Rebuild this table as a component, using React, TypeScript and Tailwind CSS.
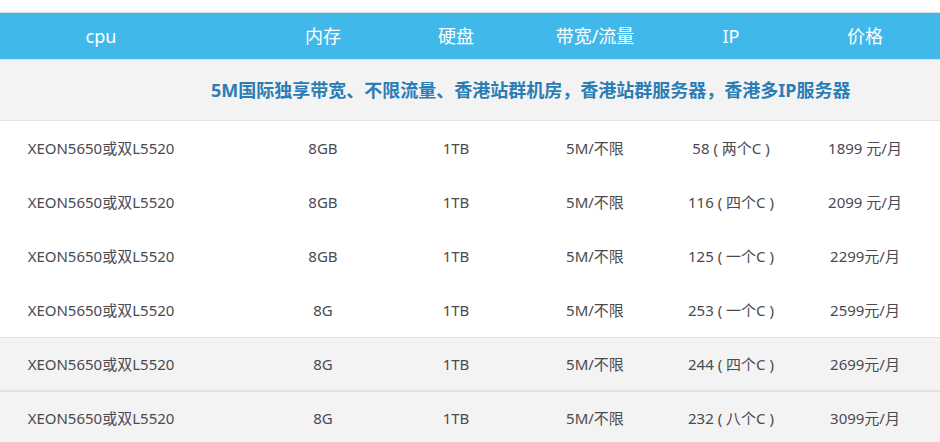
import React from "react";

const rows = [
  { cpu: "XEON5650或双L5520", mem: "8GB", disk: "1TB", bw: "5M/不限", ip: "58 ( 两个C )", price: "1899 元/月", gray: false },
  { cpu: "XEON5650或双L5520", mem: "8GB", disk: "1TB", bw: "5M/不限", ip: "116 ( 四个C )", price: "2099 元/月", gray: false },
  { cpu: "XEON5650或双L5520", mem: "8GB", disk: "1TB", bw: "5M/不限", ip: "125 ( 一个C )", price: "2299元/月", gray: false },
  { cpu: "XEON5650或双L5520", mem: "8G", disk: "1TB", bw: "5M/不限", ip: "253 ( 一个C )", price: "2599元/月", gray: false },
  { cpu: "XEON5650或双L5520", mem: "8G", disk: "1TB", bw: "5M/不限", ip: "244 ( 四个C )", price: "2699元/月", gray: true },
  { cpu: "XEON5650或双L5520", mem: "8G", disk: "1TB", bw: "5M/不限", ip: "232 ( 八个C )", price: "3099元/月", gray: true },
];

function Cells({ vals, cls }: { vals: string[]; cls: string }) {
  return (
    <>
      <div className={`w-[202px] text-center ${cls}`}>{vals[0]}</div>
      <div className={`w-[188px] pl-[54px] text-center ${cls}`}>{vals[1]}</div>
      <div className={`w-[140px] pr-[8px] text-center ${cls}`}>{vals[2]}</div>
      <div className={`w-[138px] pr-[8px] text-center ${cls}`}>{vals[3]}</div>
      <div className={`w-[135px] pr-[9px] text-center ${cls}`}>{vals[4]}</div>
      <div className={`w-[137px] pr-[13px] text-center ${cls}`}>{vals[5]}</div>
    </>
  );
}

export default function App() {
  return (
    <div
      className="w-[940px] h-[442px] overflow-hidden bg-white"
      style={{ fontFamily: '"Noto Sans", "Noto Sans CJK SC", sans-serif' }}
    >
      <div className="h-[12px]" />
      <div className="flex h-[47px] items-center border-t border-[#dcdcdc] bg-[#41b8ea] text-[18px] text-white">
        <Cells vals={["cpu", "内存", "硬盘", "带宽/流量", "IP", "价格"]} cls="whitespace-nowrap" />
      </div>
      <div className="flex h-[62px] items-center border-y border-[#e2e2e2] bg-[#f3f3f3] pl-[211px] text-[18px] font-bold text-[#2a7db5] whitespace-nowrap">
        5M国际独享带宽、不限流量、香港站群机房，香港站群服务器，香港多IP服务器
      </div>
      {rows.map((r, i) => (
        <div
          key={i}
          className={`flex items-center text-[15px] text-[#4a4a52] whitespace-nowrap ${
            r.gray ? "bg-[#f3f3f3]" : "bg-white"
          } ${i === 4 ? "h-[53px] border-t border-[#e2e2e2]" : i === 5 ? "h-[54px] border-t-2 border-[#e2e2e2]" : "h-[54px]"}`}
        >
          <Cells vals={[r.cpu, r.mem, r.disk, r.bw, r.ip, r.price]} cls="" />
        </div>
      ))}
    </div>
  );
}
